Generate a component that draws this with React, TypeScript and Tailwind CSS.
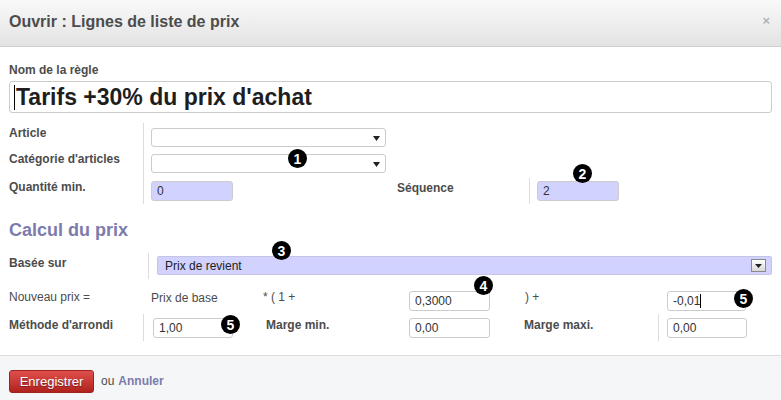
import React from 'react'

const font = "font-['Liberation_Sans',Arial,sans-serif]"

function Caret({ h = 'h-[14px]' }: { h?: string }) {
  return <span className={`inline-block w-px ${h} bg-black`} />
}

function Select({ width }: { width: string }) {
  return (
    <div className={`relative ${width} h-[19px] border border-[#cccccc] rounded-[3px] bg-white`}>
      <svg className="absolute right-[5px] top-[7px]" width="7" height="5" viewBox="0 0 7 5">
        <path d="M0 0 L7 0 L3.5 5 Z" fill="#222" />
      </svg>
    </div>
  )
}

function Field({
  value,
  width,
  tinted,
  caret,
}: {
  value: string
  width: string
  tinted?: boolean
  caret?: boolean
}) {
  return (
    <div
      className={`${width} h-[20px] border border-[#cccccc] rounded-[3px] flex items-center pl-[5px] text-[12px] text-[#333] ${
        tinted ? 'bg-[#d2d2ff]' : 'bg-white'
      }`}
    >
      {value}
      {caret && <Caret />}
    </div>
  )
}

function Badge({ n, className }: { n: number; className: string }) {
  return (
    <div
      className={`absolute w-[19px] h-[19px] rounded-full bg-black text-white font-bold text-[14px] leading-none flex items-center justify-center ${className}`}
    >
      {n}
    </div>
  )
}

export default function App() {
  return (
    <div className={`relative w-[781px] h-[400px] bg-white flex flex-col text-[12px] text-[#4c4c4c] ${font}`}>
      <div className="h-[47px] shrink-0 border-b border-[#cfcfcf] bg-gradient-to-b from-[#f9f9f9] to-[#e3e3e3] flex items-center justify-between pl-[9px] pr-[11px] pb-[3px]">
        <h2 className="text-[16px] font-bold text-[#4c4c4c]">Ouvrir : Lignes de liste de prix</h2>
        <span className="text-[13px] font-bold text-[#b4b4b4] leading-none -mt-[3px]">×</span>
      </div>

      <div className="flex-1 px-[9px] pt-[16px]">
        <label className="block font-bold leading-[14px]">Nom de la règle</label>
        <div className="mt-[4px] h-[32px] w-[763px] border border-[#cccccc] rounded-[3px] flex items-center pl-[4px] text-[23px] font-bold text-[#1e1e1e]">
          <Caret h="h-[25px]" />
          <span className="ml-[1px]">Tarifs +30% du prix d'achat</span>
        </div>

        <div className="mt-[10px]">
          <div className="flex h-[27px]">
            <div className="w-[134px] pt-[3px] font-bold leading-[14px]">Article</div>
            <div className="border-l border-[#dddddd] pl-[7px] pt-[5px]">
              <Select width="w-[235px]" />
            </div>
          </div>
          <div className="flex h-[27px]">
            <div className="w-[134px] pt-[2px] font-bold leading-[14px]">Catégorie d'articles</div>
            <div className="border-l border-[#dddddd] pl-[7px] pt-[4px]">
              <Select width="w-[235px]" />
            </div>
          </div>
          <div className="flex h-[27px]">
            <div className="w-[134px] pt-[3px] font-bold leading-[14px]">Quantité min.</div>
            <div className="border-l border-[#dddddd] pl-[7px] pt-[4px] flex">
              <Field value="0" width="w-[82px]" tinted />
              <div className="ml-[164px] w-[132px] font-bold leading-[14px]">Séquence</div>
              <div className="border-l border-[#dddddd] pl-[7px] -mt-[3px] pt-[3px]">
                <Field value="2" width="w-[82px]" tinted />
              </div>
            </div>
          </div>
        </div>

        <h3 className="mt-[16px] text-[18px] leading-[21px] font-bold text-[#7c7bad]">Calcul du prix</h3>

        <div className="mt-[12px] flex h-[26px]">
          <div className="w-[139px] pt-[3px] font-bold leading-[14px]">Basée sur</div>
          <div className="flex-1 border-l border-[#dddddd] pl-[8px] pt-[3px]">
            <div className="relative h-[19px] border border-[#c4c4e6] rounded-[2px] bg-[#d2d2ff] flex items-center pl-[7px] text-[#222]">
              Prix de revient
              <div className="absolute right-[5px] top-[2px] w-[15px] h-[13px] border border-[#8a8a8a] bg-gradient-to-b from-white to-[#d8d8d8] flex items-center justify-center">
                <svg width="7" height="4" viewBox="0 0 7 4">
                  <path d="M0 0 L7 0 L3.5 4 Z" fill="#222" />
                </svg>
              </div>
            </div>
          </div>
        </div>

        <div className="flex h-[35px] pt-[11px]">
          <div className="w-[142px] leading-[14px]">Nouveau prix =</div>
          <div className="w-[112px] leading-[14px] pt-[1px]">Prix de base</div>
          <div className="w-[146px] leading-[14px]">* ( 1 +</div>
          <div className="mt-[1px]">
            <Field value="0,3000" width="w-[81px]" />
          </div>
          <div className="ml-[35px] w-[142px] leading-[14px]">) +</div>
          <div className="mt-[1px]">
            <Field value="-0,01" width="w-[79px]" caret />
          </div>
        </div>

        <div className="flex h-[27px]">
          <div className="w-[134px] pt-[4px] font-bold leading-[14px]">Méthode d'arrondi</div>
          <div className="border-l border-[#dddddd] pl-[9px] pt-[4px] flex">
            <Field value="1,00" width="w-[80px]" />
            <div className="ml-[33px] w-[143px] font-bold leading-[14px]">Marge min.</div>
            <Field value="0,00" width="w-[81px]" />
            <div className="ml-[34px] w-[134px] font-bold leading-[14px]">Marge maxi.</div>
            <div className="border-l border-[#dddddd] pl-[8px] -mt-[4px] pt-[4px]">
              <Field value="0,00" width="w-[80px]" />
            </div>
          </div>
        </div>
      </div>

      <div className="h-[45px] shrink-0 border-t border-[#dddddd] bg-[#f5f6f8] flex items-start pl-[9px] pt-[14px]">
        <button className="w-[85px] h-[23px] rounded-[3px] border border-[#9c2320] bg-gradient-to-b from-[#df4f4b] to-[#b1211e] text-white text-[13px] [text-shadow:0_1px_1px_rgba(0,0,0,0.4)]">
          Enregistrer
        </button>
        <span className="ml-[7px] mt-[4px] text-[12px] leading-[14px] text-[#4c4c4c]">ou</span>
        <span className="ml-[4px] mt-[4px] text-[12px] leading-[14px] font-bold text-[#7c7bad]">Annuler</span>
      </div>

      <Badge n={1} className="left-[288px] top-[149px]" />
      <Badge n={2} className="left-[573px] top-[164px]" />
      <Badge n={3} className="left-[272px] top-[241px]" />
      <Badge n={4} className="left-[474px] top-[276px]" />
      <Badge n={5} className="left-[734px] top-[289px]" />
      <Badge n={5} className="left-[221px] top-[315px]" />
    </div>
  )
}
